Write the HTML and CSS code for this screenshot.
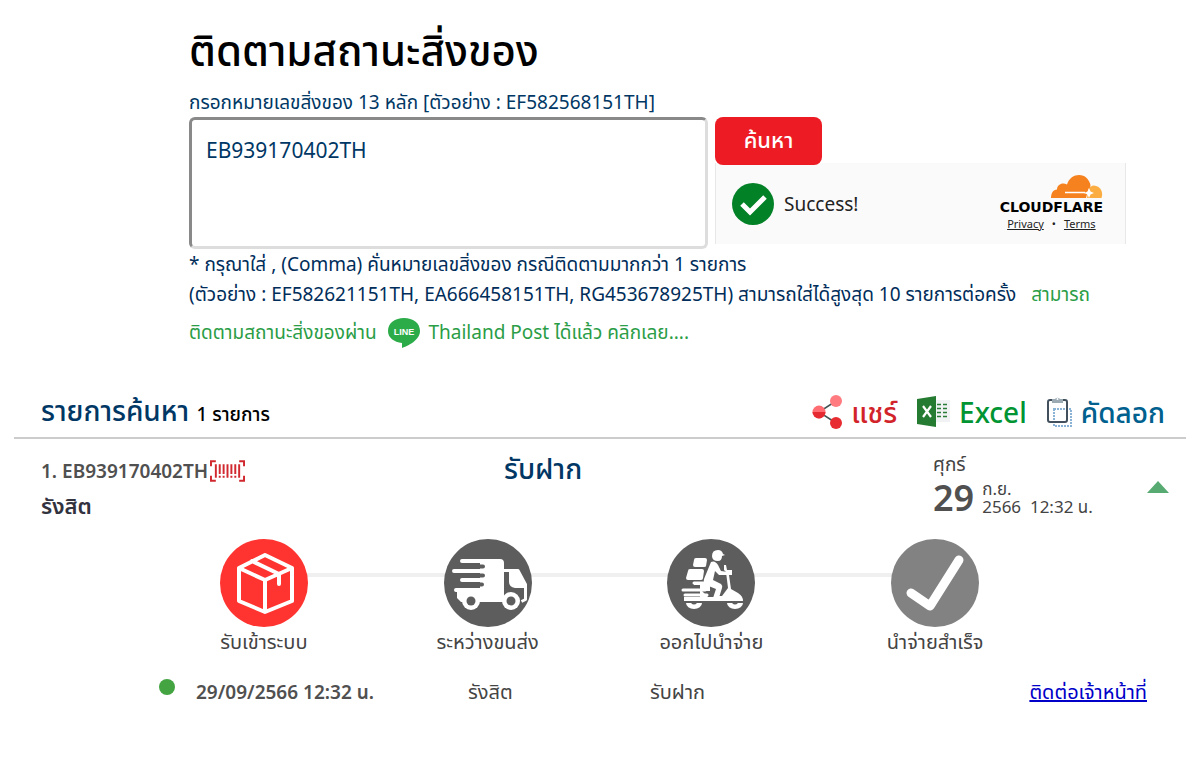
FILE: index.html
```html
<!DOCTYPE html>
<html lang="th">
<head>
    <meta charset="UTF-8">
    <meta name="viewport" content="width=device-width, initial-scale=1.0">
    <title>ติดตามสถานะสิ่งของ</title>
    <link rel="stylesheet" href="styles.css">
</head>
<body>
    <main>
        <section class="search">
            <h1>ติดตามสถานะสิ่งของ</h1>
            <form class="search-form" onsubmit="return false">
                <label for="trackNumber">กรอกหมายเลขสิ่งของ 13 หลัก [ตัวอย่าง : EF582568151TH]</label>
                <div class="search-row">
                    <textarea id="trackNumber">EB939170402TH</textarea>
                    <div class="search-side">
                        <button class="search-button" type="submit">ค้นหา</button>
                        <div class="captcha">
                            <svg class="captcha-check" viewBox="0 0 42 42" aria-hidden="true">
                                <circle cx="21" cy="21" r="21" fill="#038127"/>
                                <path d="M10 21l8 8 15-15" fill="none" stroke="#fff" stroke-width="5"/>
                            </svg>
                            <span class="captcha-status">Success!</span>
                            <div class="captcha-brand">
                                <svg class="cloud" viewBox="0 0 52 24" aria-hidden="true">
                                    <path d="M36 23h14.500c2-6-1-12.500-8.500-12.500l-4 2z" fill="#fbad41"/>
                                    <path d="M0 23c0-5 2-8 6-8.500C6 10 11 7 16 9.500 18 3 23 0 28 0c6 0 10 4 11.500 10 0 2-1 3-2 4L35 23z" fill="#f6821f"/>
                                    <path d="M14 17.500h20" fill="none" stroke="#fff" stroke-width="1.500"/>
                                    <path d="M38 13l1.500 3.500L43 18l-3.500 1.500L38 23l-1.500-3.500L33 18l3.500-1.500z" fill="#fff"/>
                                </svg>
                                <span class="brand-name">CLOUDFLARE</span>
                                <span class="brand-links"><a href="#">Privacy</a><span>•</span><a href="#">Terms</a></span>
                            </div>
                        </div>
                    </div>
                </div>
            </form>
            <p class="note">* กรุณาใส่ , (Comma) คั่นหมายเลขสิ่งของ กรณีติดตามมากกว่า 1 รายการ</p>
            <p class="note">(ตัวอย่าง : EF582621151TH, EA666458151TH, RG453678925TH) สามารถใส่ได้สูงสุด 10 รายการต่อครั้ง
                <a class="line-link" href="#"><span class="line-start">สามารถ</span><br>ติดตามสถานะสิ่งของผ่าน
                <svg class="line-icon" viewBox="0 0 32 32" role="img" aria-label="LINE">
                    <path d="M16 1C7 1 0 6 0 14c0 7 6 11 14 12l0 5c6-2 18-8 18-17C32 6 25 1 16 1z" fill="#2cab49"/>
                    <text x="16" y="18" text-anchor="middle">LINE</text>
                </svg>
                Thailand Post ได้แล้ว คลิกเลย....</a></p>
        </section>

        <section class="results">
            <header class="results-header">
                <h2>รายการค้นหา <small>1 รายการ</small></h2>
                <div class="actions">
                    <button class="action share" type="button">
                        <svg viewBox="0 0 31 34" aria-hidden="true">
                            <path d="M24 6L7 17l17 11" fill="none" stroke="#455" stroke-width="1.500"/>
                            <circle cx="24" cy="6" r="6" fill="#ff7b80"/>
                            <circle cx="7" cy="17" r="6.500" fill="#ff6d73"/>
                            <path d="M.5 17h13a6.500 6.500 0 0 1-13 0z" fill="#e52b31"/>
                            <circle cx="24" cy="28" r="6" fill="#e72d32"/>
                        </svg>แชร์</button>
                    <button class="action excel" type="button">
                        <svg viewBox="0 0 34 34" aria-hidden="true">
                            <path d="M18 5h15v22H18z" fill="#f1f2f4"/>
                            <path d="M20 9.500h4M26 9.500h4M20 13.500h4M26 13.500h4M20 17.500h4M26 17.500h4M20 21.500h4M26 21.500h4" stroke="#297c35" stroke-width="1.500"/>
                            <path d="M0 4L19 1v31L0 29z" fill="#267b32"/>
                            <path d="M6 11l8 11M14 11L6 22" stroke="#fff" stroke-width="2.200"/>
                        </svg>Excel</button>
                    <button class="action copy" type="button">
                        <svg viewBox="0 0 26 34" aria-hidden="true">
                            <rect x="7" y="14" width="17" height="17" fill="none" stroke="#8bb3d6" stroke-width="2" stroke-dasharray="2 1"/>
                            <rect x="1" y="5" width="19" height="22" rx="2" fill="none" stroke="#42505d" stroke-width="2"/>
                            <path d="M5 8V4h3a3 3 0 0 1 5 0h3v4z" fill="#9caab4"/>
                            <circle cx="10.500" cy="4" r="1" fill="#fff"/>
                        </svg>คัดลอก</button>
                </div>
            </header>

            <article class="item">
                <div class="item-id">
                    <h3>1. EB939170402TH<svg class="barcode" viewBox="0 0 36 22" aria-hidden="true">
                        <path d="M6 1H1v5M30 1h5v5M1 16v5h5M35 16v5h-5" fill="none" stroke="#d0282e" stroke-width="2"/>
                        <path d="M6 4v14M18 4v14M30 4v14" stroke="#d0282e" stroke-width="2"/>
                        <path d="M10 4v10M10 16v2M14 4v10M14 16v2M22 4v10M22 16v2M26 4v10M26 16v2" stroke="#d0282e" stroke-width="2"/>
                    </svg></h3>
                    <p class="place">รังสิต</p>
                </div>
                <p class="item-status">รับฝาก</p>
                <div class="item-date">
                    <span class="weekday">ศุกร์</span>
                    <span class="day">29</span>
                    <span class="month">ก.ย.<br>2566&nbsp; 12:32 น.</span>
                </div>
                <button class="toggle" type="button" aria-label="ย่อ"></button>
            </article>

            <ol class="steps">
                <li>
                    <svg viewBox="0 0 88 88" aria-hidden="true">
                        <circle cx="44" cy="44" r="44" fill="#ff3430"/>
                        <path d="M19 29L45 16l27 13v33L45 73 19 62zM19 29l26 12 27-12M45 41v32M32 22l27 13v10" fill="none" stroke="#fff" stroke-width="4" stroke-linejoin="round" stroke-linecap="round"/>
                    </svg>
                    <span>รับเข้าระบบ</span>
                </li>
                <li>
                    <svg viewBox="0 0 88 88" aria-hidden="true">
                        <circle cx="44" cy="44" r="44" fill="#5d5d5d"/>
                        <!-- cargo box and speed lines -->
                        <path d="M18 20h38q4 0 4 4v39H17l-4-4v-7h23V24H18a2 2 0 0 1 0-4z" fill="#fff"/>
                        <path d="M20 27.500h19M20 36.500h19M20 45.500h18" stroke="#5d5d5d" stroke-width="4" stroke-linecap="round"/>
                        <path d="M10 32h29M18 41h21M12 51h28" stroke="#fff" stroke-width="4" stroke-linecap="round"/>
                        <!-- cab -->
                        <path d="M60 31.500h14l7.500 14v15l-4 2" fill="none" stroke="#fff" stroke-width="3" stroke-linejoin="round"/>
                        <path d="M65 32h9l7 14v3H71q-6-1-6-6z" fill="#fff"/>
                        <!-- wheels -->
                        <circle cx="27" cy="62" r="9" fill="#fff"/>
                        <circle cx="27" cy="62" r="4.500" fill="#5d5d5d"/>
                        <circle cx="67" cy="62" r="9" fill="#fff"/>
                        <circle cx="67" cy="62" r="4.500" fill="#5d5d5d"/>
                    </svg>
                    <span>ระหว่างขนส่ง</span>
                </li>
                <li>
                    <svg viewBox="0 0 88 88" aria-hidden="true">
                        <circle cx="44" cy="44" r="44" fill="#5d5d5d"/>
                        <!-- parcels -->
                        <path d="M29 19h9q2 0 2 2l-1 6q0 1-2 1H28q-2 0-2-2l1-5q0-2 2-2zM23 30h12q2 0 2 2l-1 7q0 2-2 2H21q-2 0-2-2l2-7q0-2 2-2z" fill="#fff"/>
                        <!-- rider -->
                        <path d="M45 17q0-6 6-6 4 0 5 4l2 1-3 1q0 5-4 5-6 0-6-5z" fill="#fff"/>
                        <path d="M44 23q4-2 7 3l3 6 7 1v3h-9l-4-4-2 9 8 4q2 2 1 4l-4 13h-6l4-12-10-4q-3-2-2-6z" fill="#fff"/>
                        <!-- scooter -->
                        <path d="M57 26h2l1 5h5v5h-3l2 14 7 4q5 3 5 8H17v-4h30l3-1h5l6-8-2-16-2-2z" fill="#fff"/>
                        <path d="M27 44h13q3 0 3 4v4h-8l6 6H33V46h-6z" fill="#fff"/>
                        <path d="M27 44h13M16 51h22M18 56h22" stroke="#fff" stroke-width="3" stroke-linecap="round"/>
                        <path d="M19 64a8 6 0 0 0 16 0h-5q-3 3-6 0zM60 64a8 6 0 0 0 16 0h-5q-3 3-6 0z" fill="#fff"/>
                    </svg>
                    <span>ออกไปนำจ่าย</span>
                </li>
                <li>
                    <svg viewBox="0 0 88 88" aria-hidden="true">
                        <circle cx="44" cy="44" r="44" fill="#828282"/>
                        <path d="M20 54l19 13 29-46" fill="none" stroke="#fff" stroke-width="9" stroke-linecap="round" stroke-linejoin="round"/>
                    </svg>
                    <span>นำจ่ายสำเร็จ</span>
                </li>
            </ol>

            <div class="event">
                <span class="dot"></span>
                <strong>29/09/2566 12:32 น.</strong>
                <span>รังสิต</span>
                <span>รับฝาก</span>
                <a href="#">ติดต่อเจ้าหน้าที่</a>
            </div>
        </section>
    </main>
</body>
</html>
```
FILE: styles.css
```css
* {
    box-sizing: border-box;
}

body {
    margin: 0;
    background-color: #fff;
    color: #444;
    font-family: "Noto Sans", "Noto Sans Thai", sans-serif;
    font-size: 20px;
}

h1, h2, h3, p, ol {
    margin: 0;
    padding: 0;
}

button, textarea {
    font-family: inherit;
}

button {
    border: none;
    padding: 0;
    background: none;
    cursor: pointer;
}

/* search area */
.search {
    padding: 20px 74px 0 189px;
}

h1 {
    color: #000;
    font-size: 42px;
    font-weight: 500;
    line-height: 60px;
}

.search-form label {
    display: block;
    margin-top: 8px;
    color: #003764;
    font-size: 19px;
    line-height: 28px;
}

.search-row {
    display: flex;
    gap: 7px;
    margin-top: 1px;
}

textarea {
    flex: 1;
    max-width: 520px;
    height: 132px;
    padding: 16px 14px;
    border: 3px inset #ddd;
    border-radius: 6px;
    color: #003764;
    font-size: 21px;
    resize: none;
}

.search-side {
    width: 411px;
}

.search-button {
    position: relative;
    display: block;
    width: 107px;
    height: 48px;
    border-radius: 8px;
    background-color: #ed1c24;
    color: #fff;
    font-size: 22px;
    font-weight: 500;
}

.captcha {
    display: flex;
    align-items: center;
    height: 81px;
    margin-top: -2px;
    padding: 0 22px 0 16px;
    border: 1px solid #e8e8e8;
    border-width: 0 1px;
    background-color: #fafafa;
}

.captcha-check {
    width: 42px;
    height: 42px;
}

.captcha-status {
    margin-left: 10px;
    color: #222;
    font-size: 19px;
}

.captcha-brand {
    display: flex;
    flex-direction: column;
    margin-left: auto;
    color: #222;
}

.cloud {
    align-self: flex-end;
    width: 52px;
    height: 24px;
}

.brand-name {
    color: #000;
    font-family: "DejaVu Sans", sans-serif;
    font-size: 14px;
    font-weight: bold;
    line-height: 16px;
}

.brand-links {
    display: flex;
    justify-content: center;
    gap: 8px;
    font-size: 11px;
    line-height: 18px;
}

.brand-links a {
    color: inherit;
}

.note {
    color: #002d5a;
    font-size: 19px;
    line-height: 30px;
}

.line-link {
    color: #2a9d46;
    text-decoration: none;
}

.line-start {
    margin-left: 10px;
}

.line-icon {
    width: 32px;
    height: 32px;
    margin: 8px 4px 0 6px;
    vertical-align: -10px;
}

.line-icon text {
    fill: #fff;
    font: bold 9px "Liberation Sans", sans-serif;
}

/* search results */
.results {
    padding: 0 14px;
}

.results-header {
    display: flex;
    justify-content: space-between;
    align-items: center;
    height: 52px;
    margin-top: 38px;
    padding: 0 21px 0 27px;
    border-bottom: 2px solid #ccc;
}

h2 {
    color: #003764;
    font-size: 28px;
    font-weight: 500;
}

h2 small {
    color: #000;
    font-size: 19px;
}

.actions {
    display: flex;
    gap: 20px;
}

.action {
    display: flex;
    align-items: center;
    gap: 8px;
    font-size: 28px;
    font-weight: 500;
    line-height: 40px;
}

.action svg {
    height: 34px;
}

.share {
    color: #d2232a;
}

.excel {
    color: #009432;
}

.copy {
    color: #00608e;
}

.item {
    display: grid;
    grid-template-columns: 463px 1fr 214px 22px;
    align-items: center;
    padding: 14px 17px 0 27px;
}

h3 {
    display: flex;
    align-items: center;
    gap: 2px;
    color: #505050;
    font-size: 19px;
    font-weight: 600;
    line-height: 36px;
}

.barcode {
    width: 35px;
    height: 22px;
}

.place {
    color: #33333f;
    font-size: 22px;
    font-weight: 600;
    line-height: 32px;
}

.item-status {
    align-self: start;
    color: #003764;
    font-size: 28px;
    font-weight: 500;
    line-height: 30px;
}

.item-date {
    display: grid;
    grid-template-columns: auto 1fr;
    column-gap: 8px;
    align-items: center;
    margin-top: -6px;
}

.weekday {
    grid-column: 1 / 3;
    font-size: 19px;
    line-height: 28px;
}

.day {
    color: #505050;
    font-size: 36px;
    font-weight: 600;
    line-height: 40px;
}

.month {
    font-size: 17px;
    line-height: 18px;
}

.toggle {
    width: 22px;
    height: 12px;
    background-color: #57ab72;
    clip-path: polygon(50% 0, 100% 100%, 0 100%);
}

.steps {
    display: grid;
    grid-template-columns: repeat(4, 1fr);
    margin: 18px 139px 0 138px;
    list-style: none;
    background: linear-gradient(#f0f0f0, #f0f0f0) center 34px / 75% 4px no-repeat;
}

.steps li {
    display: flex;
    flex-direction: column;
    align-items: center;
    line-height: 30px;
}

.steps svg {
    width: 88px;
    height: 88px;
}

.event {
    display: grid;
    grid-template-columns: 37px 272px 182px 1fr auto;
    align-items: center;
    margin: 19px 39px 0 145px;
    line-height: 32px;
}

.event strong {
    color: #505050;
    font-size: 19px;
    font-weight: 600;
}

.event a {
    color: #0000c8;
}

.dot {
    width: 16px;
    height: 16px;
    margin-bottom: 10px;
    border-radius: 50%;
    background-color: #43a441;
}
```
